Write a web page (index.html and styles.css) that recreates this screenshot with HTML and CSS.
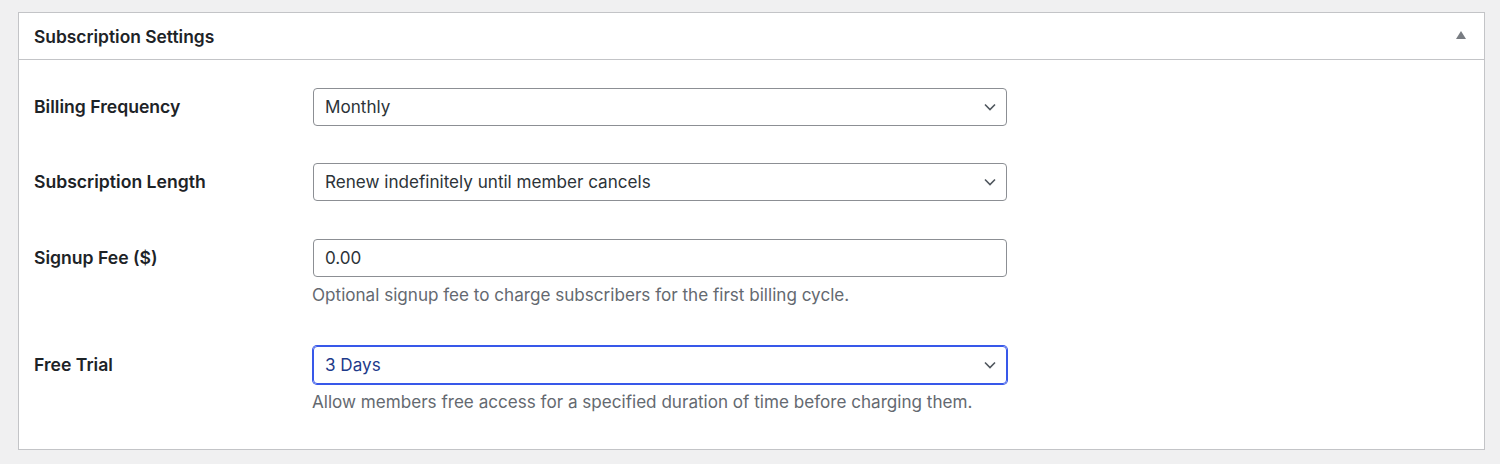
FILE: index.html
```html
<!DOCTYPE html>
<html lang="en">
  <head>
    <meta charset="UTF-8" />
    <title>Subscription Settings</title>
    <link rel="stylesheet" href="styles.css">
  </head>
  <body>
    <div class="postbox">
      <div class="postbox-header">
        <h2>Subscription Settings</h2>
        <span class="toggle-arrow"></span>
      </div>
      <div class="inside">
        <div class="field">
          <label class="field-label">Billing Frequency</label>
          <div class="field-control">
            <div class="select-wrap">
              <div class="select">Monthly</div>
              <svg class="chevron" width="12" height="8" viewBox="0 0 12 8"><path d="M1 1.5l5 5 5-5" fill="none" stroke="#50575e" stroke-width="1.6"/></svg>
            </div>
          </div>
        </div>
        <div class="field">
          <label class="field-label">Subscription Length</label>
          <div class="field-control">
            <div class="select-wrap">
              <div class="select">Renew indefinitely until member cancels</div>
              <svg class="chevron" width="12" height="8" viewBox="0 0 12 8"><path d="M1 1.5l5 5 5-5" fill="none" stroke="#50575e" stroke-width="1.6"/></svg>
            </div>
          </div>
        </div>
        <div class="field field-fee">
          <label class="field-label">Signup Fee ($)</label>
          <div class="field-control">
            <div class="select">0.00</div>
            <p class="description">Optional signup fee to charge subscribers for the first billing cycle.</p>
          </div>
        </div>
        <div class="field">
          <label class="field-label">Free Trial</label>
          <div class="field-control">
            <div class="select-wrap">
              <div class="select focused">3 Days</div>
              <svg class="chevron" width="12" height="8" viewBox="0 0 12 8"><path d="M1 1.5l5 5 5-5" fill="none" stroke="#50575e" stroke-width="1.6"/></svg>
            </div>
            <p class="description">Allow members free access for a specified duration of time before charging them.</p>
          </div>
        </div>
      </div>
    </div>
  </body>
</html>
```

FILE: styles.css
```css
body {
  margin: 0;
  padding: 12px 15px 0 18px;
  background: #f0f0f1;
  font-family: Inter, "Noto Sans", sans-serif;
  color: #1d2327;
}
.postbox {
  width: 1465px;
  background: #fff;
  border: 1px solid #c3c4c7;
}
.postbox-header {
  display: flex;
  align-items: center;
  justify-content: space-between;
  height: 46px;
  padding: 0 18px 0 15px;
  border-bottom: 1px solid #c3c4c7;
}
.postbox-header h2 {
  margin: 0;
  font-size: 17.4px;
  font-weight: 600;
}
.toggle-arrow {
  width: 0;
  height: 0;
  border-left: 5px solid transparent;
  border-right: 5px solid transparent;
  border-bottom: 8px solid #787c82;
  margin-top: -2px;
}
.inside {
  display: flex;
  flex-direction: column;
  gap: 37px;
  padding: 28px 15px 33px;
}
.field {
  display: flex;
  align-items: flex-start;
}
.field-fee {
  margin-top: 1px;
}
.field-label {
  width: 279px;
  line-height: 37px;
  font-size: 17.6px;
  font-weight: 600;
}
.field-control {
  width: 694px;
}
.select-wrap {
  position: relative;
}
.select {
  box-sizing: border-box;
  height: 38px;
  padding: 0 11px;
  border: 1px solid #8c8f94;
  border-radius: 4px;
  font-size: 17.1px;
  line-height: 35px;
  color: #2c3338;
}
.select.focused {
  border-color: #3858e9;
  box-shadow: 0 0 0 1px #3858e9;
  color: #1e3a8a;
}
.chevron {
  position: absolute;
  right: 11px;
  top: 15px;
}
.description {
  margin: 8px 0 4px -1px;
  font-size: 17.1px;
  line-height: 20px;
  color: #646970;
}
```
